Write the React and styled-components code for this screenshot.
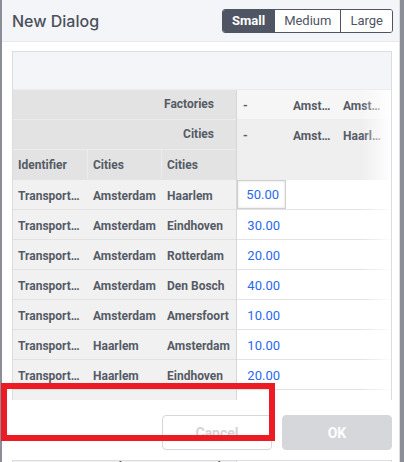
import React from "react";
import styled, { createGlobalStyle } from "styled-components";

const GlobalStyle = createGlobalStyle`
  html, body {
    margin: 0;
    padding: 0;
  }
  body {
    background: #8b8e97;
    font-family: Roboto, "Liberation Sans", sans-serif;
  }
  * {
    box-sizing: border-box;
  }
`;

const factories = ["-", "Amsterdam", "Amsterdam"];
const cities = ["-", "Amsterdam", "Haarlem"];

const rows = [
  { id: "Transportation", from: "Amsterdam", to: "Haarlem", value: "50.00" },
  { id: "Transportation", from: "Amsterdam", to: "Eindhoven", value: "30.00" },
  { id: "Transportation", from: "Amsterdam", to: "Rotterdam", value: "20.00" },
  { id: "Transportation", from: "Amsterdam", to: "Den Bosch", value: "40.00" },
  { id: "Transportation", from: "Amsterdam", to: "Amersfoort", value: "10.00" },
  { id: "Transportation", from: "Haarlem", to: "Amsterdam", value: "10.00" },
  { id: "Transportation", from: "Haarlem", to: "Eindhoven", value: "20.00" },
  { id: "Transportation", from: "Haarlem", to: "Rotterdam", value: "30.00" },
];

const App = () => {
  return (
    <>
      <GlobalStyle />
      <Screen>
        <Dialog>
          <Header>
            <Title>New Dialog</Title>
            <Segmented>
              <Segment $active>Small</Segment>
              <Segment>Medium</Segment>
              <Segment>Large</Segment>
            </Segmented>
          </Header>

          <Body>
            <Panel>
              <Toolbar />
              <Grid>
                <Pinned>
                  <SpanHead>Factories</SpanHead>
                  <SpanHead>Cities</SpanHead>
                  <ColumnRow $head>
                    <Cell>Identifier</Cell>
                    <Cell>Cities</Cell>
                    <Cell>Cities</Cell>
                  </ColumnRow>
                  {rows.map((r, i) => (
                    <ColumnRow key={i}>
                      <Cell>{r.id}</Cell>
                      <Cell>{r.from}</Cell>
                      <Cell>{r.to}</Cell>
                    </ColumnRow>
                  ))}
                </Pinned>
                <Scroll>
                  <HeadRow $light>
                    {factories.map((f, i) => (
                      <Cell key={i}>{f}</Cell>
                    ))}
                  </HeadRow>
                  <HeadRow>
                    {cities.map((c, i) => (
                      <Cell key={i}>{c}</Cell>
                    ))}
                  </HeadRow>
                  <HeadRow />
                  {rows.map((r, i) => (
                    <DataRow key={i}>
                      <Value $focused={i === 0}>{r.value}</Value>
                    </DataRow>
                  ))}
                  <Fade />
                </Scroll>
              </Grid>
            </Panel>
          </Body>

          <Footer>
            <Button>Cancel</Button>
            <Button $primary>OK</Button>
          </Footer>

          <Body $last>
            <Panel $peek>
              <Grid>
                <Pinned>
                  <ColumnRow $peek>
                    <Cell>Transportation</Cell>
                    <Cell>Haarlem</Cell>
                    <Cell>Den Bosch</Cell>
                  </ColumnRow>
                </Pinned>
                <Scroll>
                  <DataRow $peek>
                    <Value $peek>20.00</Value>
                  </DataRow>
                </Scroll>
              </Grid>
            </Panel>
          </Body>
        </Dialog>
        <Annotation />
      </Screen>
    </>
  );
};

export default App;

const Screen = styled.div`
  position: relative;
  height: 462px;
  overflow: hidden;
  padding-left: 2px;
`;

const Dialog = styled.div`
  width: 398px;
  height: 100%;
  background: #fff;
  border-right: 1px solid #dcdde1;
  display: flex;
  flex-direction: column;
`;

const Header = styled.div`
  flex: none;
  height: 42px;
  display: flex;
  align-items: center;
  justify-content: space-between;
  padding: 0 6px 0 10px;
  background: #f4f5f8;
  border-bottom: 1px solid #e7e8ec;
`;

const Title = styled.div`
  font-family: Inter, "Open Sans", sans-serif;
  font-size: 16px;
  font-weight: 500;
  color: #4b505b;
  margin-top: 1px;
`;

const Segmented = styled.div`
  display: flex;
  height: 24px;
  border: 1px solid #4f5563;
  border-radius: 3px;
  overflow: hidden;
`;

const Segment = styled.button`
  border: none;
  border-left: 1px solid #4f5563;
  padding: 0 9px;
  margin: 0;
  font-family: Roboto, sans-serif;
  font-size: 13px;
  font-weight: ${(p) => (p.$active ? 700 : 400)};
  background: ${(p) => (p.$active ? "#4f5563" : "#fff")};
  color: ${(p) => (p.$active ? "#fff" : "#4f5563")};
  &:first-child {
    border-left: none;
  }
`;

const Body = styled.div`
  flex: none;
  padding: ${(p) => (p.$last ? "0 7px 0 10px" : "9px 7px 0 10px")};
`;

const Panel = styled.div`
  height: ${(p) => (p.$peek ? "40px" : "349px")};
  border: 1px solid #dcdde0;
  border-bottom: none;
  display: flex;
  flex-direction: column;
  overflow: hidden;
`;

const Toolbar = styled.div`
  flex: none;
  height: 38px;
  background: #f4f5f8;
  border-bottom: 1px solid #ebecef;
`;

const Grid = styled.div`
  flex: 1;
  display: flex;
  font-size: 12px;
  font-weight: 700;
  color: #555b66;
`;

const Pinned = styled.div`
  flex: none;
  width: 224px;
  border-right: 1px solid #d6d7da;
`;

const Scroll = styled.div`
  flex: 1;
  position: relative;
  overflow: hidden;
`;

const Cell = styled.div`
  padding: 0 2px 0 5px;
  white-space: nowrap;
  overflow: hidden;
  text-overflow: ellipsis;
`;

const SpanHead = styled.div`
  height: 30px;
  line-height: 29px;
  text-align: right;
  padding-right: 22px;
  background: #e3e3e3;
  border-bottom: 1px solid #ececec;
`;

const ColumnRow = styled.div`
  display: grid;
  grid-template-columns: 74px 74px 1fr;
  height: ${(p) => (p.$peek ? "14px" : "30px")};
  padding-top: ${(p) => (p.$head || p.$peek ? "0" : "4px")};
  line-height: ${(p) => (p.$peek ? "13px" : p.$head ? "30px" : "24px")};
  background: ${(p) => (p.$head ? "#e3e3e3" : "#f1f1f1")};
  border-bottom: 1px solid ${(p) => (p.$head ? "#e3e3e3" : "#e1e1e1")};

  ${Cell}:first-child {
    padding-right: 6px;
  }
  ${Cell} + ${Cell} {
    border-left: 1px solid ${(p) => (p.$head ? "#ececec" : "transparent")};
  }
`;

const HeadRow = styled.div`
  display: grid;
  grid-template-columns: repeat(3, 50px);
  height: 30px;
  padding-top: 4px;
  line-height: 24px;
  background: ${(p) => (p.$light ? "#f6f6f7" : "#efefef")};
  border-bottom: 1px solid ${(p) => (p.$light ? "#eeeeef" : "#efefef")};

  ${Cell} {
    padding: 0 6px;
  }
`;

const DataRow = styled.div`
  display: grid;
  grid-template-columns: 49px 1fr;
  height: ${(p) => (p.$peek ? "14px" : "30px")};
  background: #fff;
  border-bottom: 1px solid #e3e3e3;
`;

const Value = styled.div`
  text-align: right;
  padding: ${(p) => (p.$peek ? "0 6px 0 0" : "4px 6px 0 0")};
  line-height: ${(p) => (p.$peek ? "14px" : "24px")};
  font-size: 13px;
  font-weight: 400;
  color: #2968ee;
  ${(p) =>
    p.$focused &&
    `
    padding-top: 0;
    border: 1px solid #cfcfcf;
    box-shadow: inset 0 0 3px rgba(0, 0, 0, 0.12);
    line-height: 27px;
  `}
`;

const Fade = styled.div`
  position: absolute;
  top: 0;
  right: 0;
  bottom: 0;
  width: 30px;
  background: linear-gradient(
    to right,
    rgba(255, 255, 255, 0),
    rgba(255, 255, 255, 0.92)
  );
`;

const Footer = styled.div`
  flex: none;
  display: flex;
  justify-content: flex-end;
  gap: 10px;
  padding: 15px 7px 10px 10px;
  background: #fff;
`;

const Button = styled.button`
  width: 110px;
  height: 35px;
  border-radius: 4px;
  font-family: Roboto, sans-serif;
  font-size: 14px;
  font-weight: 700;
  border: 1px solid ${(p) => (p.$primary ? "#d6d7db" : "#d6d7da")};
  background: ${(p) => (p.$primary ? "#d6d7db" : "#fff")};
  color: ${(p) => (p.$primary ? "#fff" : "#d3d4d8")};
`;

const Annotation = styled.div`
  position: absolute;
  left: 1px;
  top: 383px;
  width: 274px;
  height: 58px;
  border: 6px solid #ed1c24;
  pointer-events: none;
`;
